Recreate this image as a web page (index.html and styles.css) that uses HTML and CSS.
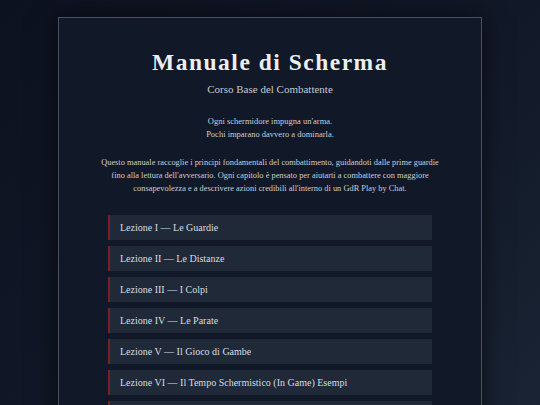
FILE: index.html
```html
<!DOCTYPE html>
<html lang="it">

<head>
   <meta charset="UTF-8">
   <meta name="viewport" content="width=device-width, initial-scale=1.0">
   <title>Manuale di Scherma</title>
   <link rel="stylesheet" href="styles.css">
</head>

<body>
   <div class="manuale">
      <h1>Manuale di Scherma</h1>
      <p class="sottotitolo">Corso Base del Combattente</p>

      <p class="motto">Ogni schermidore impugna un'arma.<br>Pochi imparano davvero a dominarla.</p>

      <p class="intro">Questo manuale raccoglie i principi fondamentali del combattimento, guidandoti dalle prime guardie
         fino alla lettura dell'avversario. Ogni capitolo è pensato per aiutarti a combattere con maggiore
         consapevolezza e a descrivere azioni credibili all'interno di un GdR Play by Chat.</p>

      <ul class="lezioni">
         <li><a href="#">Lezione I — Le Guardie</a></li>
         <li><a href="#">Lezione II — Le Distanze</a></li>
         <li><a href="#">Lezione III — I Colpi</a></li>
         <li><a href="#">Lezione IV — Le Parate</a></li>
         <li><a href="#">Lezione V — Il Gioco di Gambe</a></li>
         <li><a href="#">Lezione VI — Il Tempo Schermistico (In Game) Esempi</a></li>
         <li><a href="#">Lezione VII — La Lettura dell'Avversario</a></li>
      </ul>
   </div>
</body>

</html>
```

FILE: styles.css
```css
body {
   margin: 0;
   padding: 17px 0 40px;
   font-family: "Liberation Serif", "DejaVu Serif", serif;
   background: linear-gradient(135deg, #0d1220 0%, #111827 50%, #1b2636 100%);
   color: #d8dce3;
   min-height: 100vh;
   box-sizing: border-box;
}

.manuale {
   width: 424px;
   margin: 0 auto;
   box-sizing: border-box;
   padding: 30px 40px 30px;
   background: #111827;
   border: 1px solid #4a515e;
   box-shadow: 0 0 24px rgba(0, 0, 0, 0.55);
   text-align: center;
}

h1 {
   margin: 0;
   font-family: "Liberation Serif", serif;
   font-size: 23.5px;
   font-weight: bold;
   letter-spacing: 1.5px;
   color: #eceef2;
   line-height: 28px;
}

.sottotitolo {
   margin: 7px 0 0;
   font-size: 11px;
   color: #c3c8d1;
}

.motto {
   margin: 20px 0 0;
   font-size: 8.5px;
   line-height: 13px;
   color: #c9ced6;
}

.intro {
   margin: 15px 0 0;
   font-size: 8.4px;
   line-height: 13px;
   color: #c9ced6;
}

.lezioni {
   list-style: none;
   margin: 20px 9px 0;
   padding: 0;
   display: flex;
   flex-direction: column;
   gap: 6px;
   text-align: left;
}

.lezioni a {
   display: block;
   height: 25px;
   line-height: 25px;
   padding-left: 10px;
   background: #1f2937;
   border-left: 2px solid #7f1d25;
   color: #d8dce3;
   font-size: 10px;
   text-decoration: none;
}
```
